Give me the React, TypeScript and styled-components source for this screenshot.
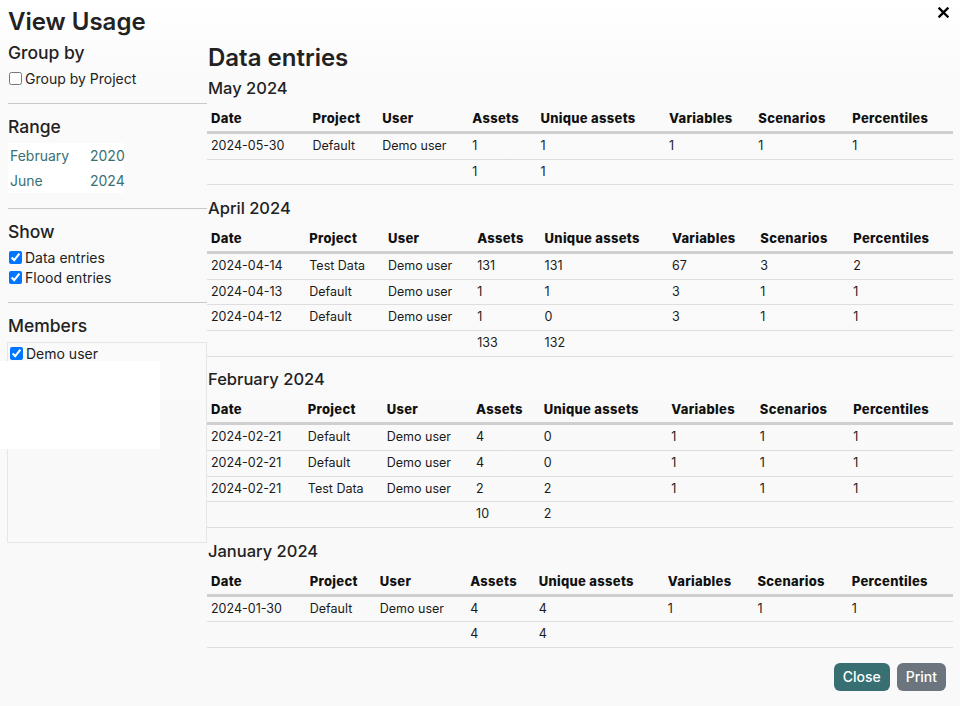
import styled, { createGlobalStyle } from 'styled-components'

type Entry = {
  date: string
  project: string
  user: string
  assets: number
  unique: number
  variables: number
  scenarios: number
  percentiles: number
}

type Month = {
  title: string
  entries: Entry[]
  totalAssets: number
  totalUnique: number
}

const months: Month[] = [
  {
    title: 'May 2024',
    entries: [
      { date: '2024-05-30', project: 'Default', user: 'Demo user', assets: 1, unique: 1, variables: 1, scenarios: 1, percentiles: 1 },
    ],
    totalAssets: 1,
    totalUnique: 1,
  },
  {
    title: 'April 2024',
    entries: [
      { date: '2024-04-14', project: 'Test Data', user: 'Demo user', assets: 131, unique: 131, variables: 67, scenarios: 3, percentiles: 2 },
      { date: '2024-04-13', project: 'Default', user: 'Demo user', assets: 1, unique: 1, variables: 3, scenarios: 1, percentiles: 1 },
      { date: '2024-04-12', project: 'Default', user: 'Demo user', assets: 1, unique: 0, variables: 3, scenarios: 1, percentiles: 1 },
    ],
    totalAssets: 133,
    totalUnique: 132,
  },
  {
    title: 'February 2024',
    entries: [
      { date: '2024-02-21', project: 'Default', user: 'Demo user', assets: 4, unique: 0, variables: 1, scenarios: 1, percentiles: 1 },
      { date: '2024-02-21', project: 'Default', user: 'Demo user', assets: 4, unique: 0, variables: 1, scenarios: 1, percentiles: 1 },
      { date: '2024-02-21', project: 'Test Data', user: 'Demo user', assets: 2, unique: 2, variables: 1, scenarios: 1, percentiles: 1 },
    ],
    totalAssets: 10,
    totalUnique: 2,
  },
  {
    title: 'January 2024',
    entries: [
      { date: '2024-01-30', project: 'Default', user: 'Demo user', assets: 4, unique: 4, variables: 1, scenarios: 1, percentiles: 1 },
    ],
    totalAssets: 4,
    totalUnique: 4,
  },
]

const headers = ['Date', 'Project', 'User', 'Assets', 'Unique assets', 'Variables', 'Scenarios', 'Percentiles']

const App = () => {
  return (
    <>
      <GlobalStyle />
      <Modal>
        <Header>
          <Title>View Usage</Title>
          <CloseX aria-label="close">
            <svg width="11" height="11" viewBox="0 0 11 11">
              <path d="M1.5 1.5 L9.5 9.5 M9.5 1.5 L1.5 9.5" stroke="#000" strokeWidth="2.4" strokeLinecap="square" />
            </svg>
          </CloseX>
        </Header>
        <Body>
          <Sidebar>
            <SideSection>
              <SideHeading>Group by</SideHeading>
              <CheckRow>
                <input type="checkbox" />
                Group by Project
              </CheckRow>
            </SideSection>
            <Divider />
            <SideSection>
              <SideHeading>Range</SideHeading>
              <RangeBox>
                <RangeRow>
                  <RangeValue>February</RangeValue>
                  <RangeValue>2020</RangeValue>
                </RangeRow>
                <RangeRow>
                  <RangeValue>June</RangeValue>
                  <RangeValue>2024</RangeValue>
                </RangeRow>
              </RangeBox>
            </SideSection>
            <Divider />
            <SideSection>
              <SideHeading>Show</SideHeading>
              <CheckRow>
                <input type="checkbox" defaultChecked />
                Data entries
              </CheckRow>
              <CheckRow>
                <input type="checkbox" defaultChecked />
                Flood entries
              </CheckRow>
            </SideSection>
            <Divider />
            <SideSection>
              <SideHeading>Members</SideHeading>
              <MembersBox>
                <CheckRow>
                  <input type="checkbox" defaultChecked />
                  Demo user
                </CheckRow>
                <BlankPopup />
              </MembersBox>
            </SideSection>
          </Sidebar>
          <Main>
            <MainHeading>Data entries</MainHeading>
            {months.map((m) => (
              <MonthBlock key={m.title}>
                <MonthTitle>{m.title}</MonthTitle>
                <Table>
                  <thead>
                    <tr>
                      {headers.map((h) => (
                        <th key={h}>{h}</th>
                      ))}
                    </tr>
                  </thead>
                  <tbody>
                    {m.entries.map((e, i) => (
                      <tr key={i}>
                        <td>{e.date}</td>
                        <td>{e.project}</td>
                        <td>{e.user}</td>
                        <td>{e.assets}</td>
                        <td>{e.unique}</td>
                        <td>{e.variables}</td>
                        <td>{e.scenarios}</td>
                        <td>{e.percentiles}</td>
                      </tr>
                    ))}
                    <tr>
                      <td />
                      <td />
                      <td />
                      <td>{m.totalAssets}</td>
                      <td>{m.totalUnique}</td>
                      <td />
                      <td />
                      <td />
                    </tr>
                  </tbody>
                </Table>
              </MonthBlock>
            ))}
            <Footer>
              <Button variant="primary">Close</Button>
              <Button variant="secondary">Print</Button>
            </Footer>
          </Main>
        </Body>
      </Modal>
    </>
  )
}

const GlobalStyle = createGlobalStyle`
  html, body {
    margin: 0;
    padding: 0;
  }
  body {
    font-family: Inter, "Noto Sans", "Liberation Sans", sans-serif;
    color: #212529;
    background: #fff;
  }
`
const Modal = styled.div`
  width: 960px;
  height: 706px;
  box-sizing: border-box;
  padding: 0 7px 0 8px;
  background: linear-gradient(180deg, #ffffff 0%, #fafafa 12%, #f9f9f9 100%);
  overflow: hidden;
`
const Header = styled.header`
  display: flex;
  justify-content: space-between;
  align-items: flex-start;
  height: 43px;
`
const Title = styled.h1`
  margin: 7px 0 0 0;
  font-size: 24px;
  font-weight: 600;
  line-height: 30px;
  color: #222;
`
const CloseX = styled.span`
  display: block;
  margin: 7px 4px 0 0;
  line-height: 0;
`
const Body = styled.div`
  display: flex;
  align-items: flex-start;
`
const Sidebar = styled.aside`
  width: 199px;
  flex: none;
  display: flex;
  flex-direction: column;
`
const SideSection = styled.section`
  display: flex;
  flex-direction: column;
`
const SideHeading = styled.h3`
  margin: 0 0 5px 0;
  font-size: 17.5px;
  font-weight: 500;
  line-height: 20px;
  color: #222;
`
const CheckRow = styled.label`
  display: flex;
  align-items: center;
  gap: 3px;
  height: 20px;
  font-size: 14px;
  color: #222;
  & input {
    margin: 0 0 0 1px;
    width: 13px;
    height: 13px;
  }
`
const Divider = styled.hr`
  width: 100%;
  margin: 15px 0 13px 0;
  border: none;
  border-top: 1px solid #c8c8c8;
`
const RangeBox = styled.div`
  display: flex;
  flex-direction: column;
  width: 116px;
  margin-top: 1px;
  background: #fff;
`
const RangeRow = styled.div`
  display: grid;
  grid-template-columns: 80px 1fr;
  height: 25px;
  align-items: center;
  padding-left: 2px;
`
const RangeValue = styled.span`
  font-size: 14px;
  color: #3a7073;
`
const MembersBox = styled.div`
  position: relative;
  margin-left: -1px;
  margin-top: 1px;
  height: 199px;
  border: 1px solid #e6e6e6;
  padding-left: 1px;
`
const BlankPopup = styled.div`
  position: absolute;
  left: -8px;
  top: 18px;
  width: 160px;
  height: 88px;
  background: #fff;
`
const Main = styled.main`
  flex: 1;
  display: flex;
  flex-direction: column;
`
const MainHeading = styled.h2`
  margin: 0 0 6px 1px;
  font-size: 24px;
  font-weight: 600;
  line-height: 29px;
  color: #222;
`
const MonthBlock = styled.section`
  display: flex;
  flex-direction: column;
  & + & {
    margin-top: 12.5px;
  }
`
const MonthTitle = styled.h4`
  margin: 0 0 8px 1px;
  font-size: 16.5px;
  font-weight: 500;
  line-height: 20px;
  color: #222;
`
const Table = styled.table`
  width: 100%;
  border-collapse: collapse;
  font-size: 12.5px;
  color: #1a1a1a;
  & th {
    text-align: left;
    font-weight: 800;
    font-size: 13px;
    letter-spacing: 0.3px;
    color: #111;
    padding: 5px 4px 5px 4px;
    line-height: 15px;
    border-bottom: 3px solid #cfcfcf;
    white-space: nowrap;
  }
  & td {
    padding: 5px 4px;
    line-height: 14.7px;
    height: 14.7px;
    border-bottom: 1px solid #dedede;
    white-space: nowrap;
  }
`
const Footer = styled.div`
  display: flex;
  justify-content: flex-end;
  gap: 7px;
  margin-top: 15px;
  padding-right: 7px;
`
const Button = styled.button<{ variant: 'primary' | 'secondary' }>`
  height: 28px;
  padding: 0 9px;
  border: none;
  border-radius: 6px;
  font-family: inherit;
  font-size: 14px;
  font-weight: 500;
  color: #fff;
  background: ${(p) => (p.variant === 'primary' ? '#376f72' : '#6c757d')};
`

export default App
